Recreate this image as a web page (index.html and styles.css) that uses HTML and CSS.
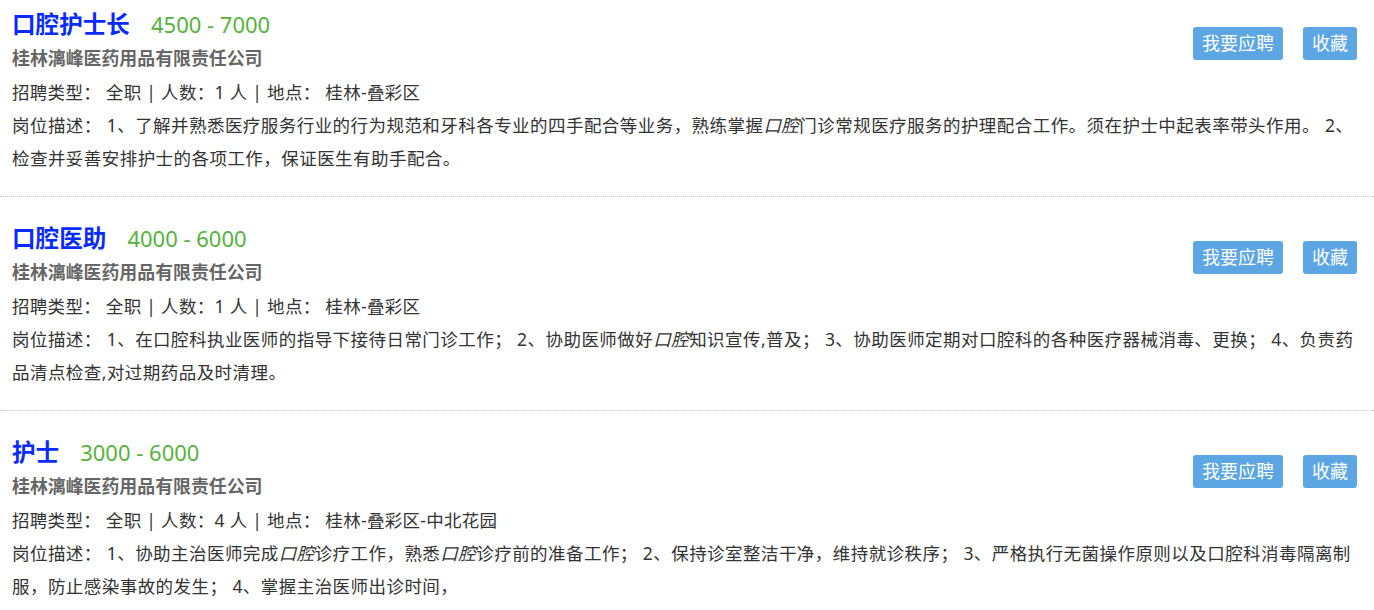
FILE: index.html
```html
<!DOCTYPE html>
<html lang="zh-CN">
<head>
<meta charset="utf-8">
<title>招聘</title>
<link rel="stylesheet" href="styles.css">
</head>
<body>
<div class="list">
  <div class="job first">
    <div class="head"><span class="title">口腔护士长</span><span class="salary">4500 - 7000</span></div>
    <div class="company">桂林漓峰医药用品有限责任公司</div>
    <div class="info">招聘类型： 全职 | 人数：1 人 | 地点： 桂林-叠彩区</div>
    <div class="actions"><a class="btn">我要应聘</a><a class="btn">收藏</a></div>
    <div class="desc">岗位描述： 1、了解并熟悉医疗服务行业的行为规范和牙科各专业的四手配合等业务，熟练掌握<em>口腔</em>门诊常规医疗服务的护理配合工作。须在护士中起表率带头作用。 2、检查并妥善安排护士的各项工作，保证医生有助手配合。</div>
  </div>
  <div class="job">
    <div class="head"><span class="title">口腔医助</span><span class="salary">4000 - 6000</span></div>
    <div class="company">桂林漓峰医药用品有限责任公司</div>
    <div class="info">招聘类型： 全职 | 人数：1 人 | 地点： 桂林-叠彩区</div>
    <div class="actions"><a class="btn">我要应聘</a><a class="btn">收藏</a></div>
    <div class="desc">岗位描述： 1、在口腔科执业医师的指导下接待日常门诊工作； 2、协助医师做好<em>口腔</em>知识宣传,普及； 3、协助医师定期对口腔科的各种医疗器械消毒、更换； 4、负责药品清点检查,对过期药品及时清理。</div>
  </div>
  <div class="job">
    <div class="head"><span class="title">护士</span><span class="salary">3000 - 6000</span></div>
    <div class="company">桂林漓峰医药用品有限责任公司</div>
    <div class="info">招聘类型： 全职 | 人数：4 人 | 地点： 桂林-叠彩区-中北花园</div>
    <div class="actions"><a class="btn">我要应聘</a><a class="btn">收藏</a></div>
    <div class="desc">岗位描述： 1、协助主治医师完成<em>口腔</em>诊疗工作，熟悉<em>口腔</em>诊疗前的准备工作； 2、保持诊室整洁干净，维持就诊秩序； 3、严格执行无菌操作原则以及口腔科消毒隔离制服，防止感染事故的发生； 4、掌握主治医师出诊时间，</div>
  </div>
</div>
</body>
</html>
```

FILE: styles.css
```css
html, body {
  margin: 0;
  padding: 0;
  background: #fff;
}
body {
  font-family: "Noto Sans", "Noto Sans CJK SC", sans-serif;
  color: #333;
}
.job {
  display: grid;
  grid-template-columns: 1fr auto;
  padding: 24px 17px 21px 12px;
  border-bottom: 1px dotted #c8c8c8;
}
.job.first {
  padding-top: 7px;
}
.head {
  grid-column: 1;
  height: 34px;
  line-height: 34px;
  white-space: nowrap;
}
.title {
  font-size: 23.6px;
  font-weight: bold;
  color: #0a2bff;
}
.salary {
  font-size: 22px;
  color: #55b33b;
  margin-left: 21px;
}
.company {
  grid-column: 1;
  height: 34px;
  line-height: 34px;
  font-size: 17.9px;
  font-weight: bold;
  color: #666;
}
.info {
  grid-column: 1;
  height: 34px;
  line-height: 34px;
  font-size: 17.5px;
  letter-spacing: 0.3px;
}
.actions {
  grid-column: 2;
  grid-row: 1 / 4;
  display: flex;
  gap: 20px;
  align-items: flex-start;
  margin-top: 20px;
}
.btn {
  display: block;
  background: #5ba6e3;
  color: #fff;
  font-size: 18px;
  line-height: 33px;
  height: 33px;
  padding: 0 9px;
  border-radius: 3px;
}
.desc {
  grid-column: 1 / -1;
  font-size: 17.5px;
  line-height: 33px;
  letter-spacing: 0.45px;
}
.desc em {
  font-style: italic;
}
```
